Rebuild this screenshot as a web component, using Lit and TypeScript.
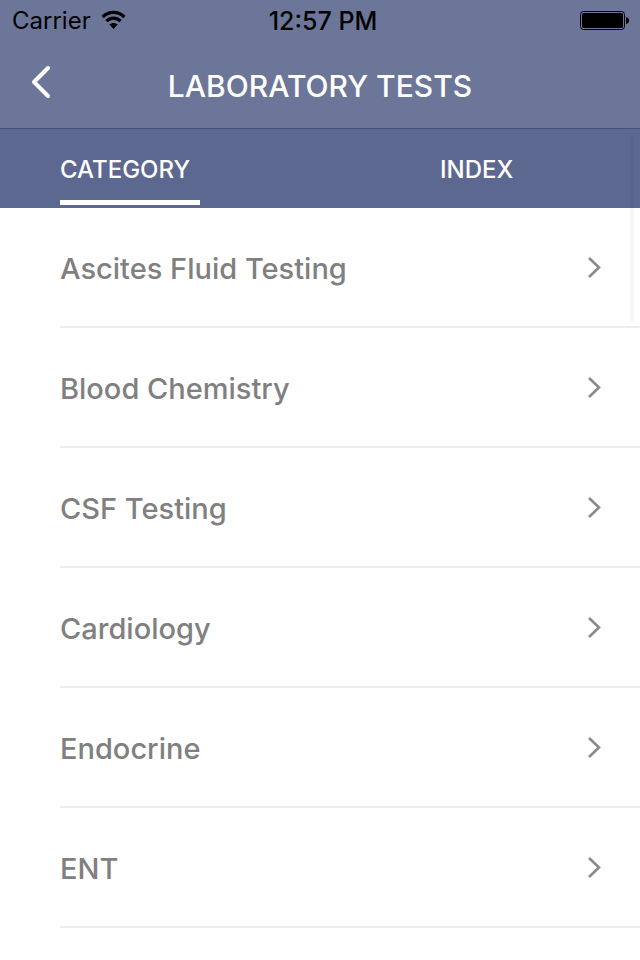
import { LitElement, html, css } from "lit";
import { customElement, state } from "lit/decorators.js";
import { classMap } from "lit/directives/class-map.js";

@customElement("status-bar")
export class StatusBar extends LitElement {
  static styles = css`
    :host {
      display: grid;
      grid-template-columns: 1fr auto 1fr;
      align-items: center;
      height: 40px;
      padding: 0 10px 0 12px;
      box-sizing: border-box;
      color: #000;
      font-size: 24px;
      line-height: 40px;
    }
    .carrier {
      display: flex;
      align-items: center;
      gap: 10px;
    }
    .carrier span,
    .time {
      padding-top: 2px;
      line-height: 38px;
    }
    .time {
      padding-left: 4px;
      font-size: 25px;
      font-weight: 500;
    }
    .battery {
      justify-self: end;
    }
    svg {
      display: block;
    }
  `;

  render() {
    return html`
      <div class="carrier">
        <span>Carrier</span>
        <svg width="26" height="20" viewBox="0 0 26 20" aria-label="Wi-Fi">
          <g fill="none" stroke="#000" stroke-width="3.2">
            <path d="M1.6 7C8 0.8 17 0.8 23.4 7" />
            <path d="M5.4 11.2C9.6 7.2 15.4 7.2 19.6 11.2" />
          </g>
          <path d="M12.5 19L8.3 14.6C10.7 12.4 14.3 12.4 16.7 14.6Z" />
        </svg>
      </div>
      <span class="time">12:57 PM</span>
      <svg class="battery" width="50" height="20" viewBox="0 0 50 20" aria-label="Battery full">
        <rect x="0.5" y="1.5" width="44" height="18" rx="3" fill="none" stroke="#000" />
        <rect x="2" y="3" width="41" height="15" rx="1.5" />
        <path d="M46 7C50 7.5 50 13.5 46 14Z" />
      </svg>
    `;
  }
}

@customElement("app-root")
export class AppRoot extends LitElement {
  @state() private tab = "CATEGORY";

  private tabs = ["CATEGORY", "INDEX"];

  private categories = [
    "Ascites Fluid Testing",
    "Blood Chemistry",
    "CSF Testing",
    "Cardiology",
    "Endocrine",
    "ENT",
  ];

  static styles = css`
    :host {
      display: block;
      position: relative;
      min-height: 100vh;
      background: #fff;
      font-family: Inter, "Liberation Sans", sans-serif;
    }
    .top {
      background: #6c7699;
    }
    .nav {
      display: grid;
      grid-template-columns: 80px 1fr 80px;
      align-items: center;
      height: 88px;
    }
    .back {
      display: flex;
      align-items: center;
      height: 88px;
      padding: 0 0 4px 28px;
      border: 0;
      background: none;
      cursor: pointer;
    }
    .title {
      margin: 0;
      padding-top: 4px;
      color: #fff;
      font-size: 30px;
      font-weight: 500;
      line-height: 36px;
      text-align: center;
      white-space: nowrap;
    }
    .tabs {
      display: flex;
      justify-content: space-between;
      height: 80px;
      padding: 0 60px;
      box-sizing: border-box;
      border-top: 1px solid #444f7a;
      background: #5d6890;
    }
    .tab {
      width: 140px;
      height: 76px;
      padding: 10px 0 0;
      box-sizing: border-box;
      border: 0;
      border-bottom: 5px solid transparent;
      background: none;
      color: #fff;
      font: 500 24px/32px Inter, "Liberation Sans", sans-serif;
      text-align: left;
      cursor: pointer;
    }
    .tab.active {
      border-bottom-color: #fff;
    }
    .list {
      margin: 0;
      padding: 0 0 0 60px;
      list-style: none;
    }
    .row {
      display: flex;
      align-items: center;
      justify-content: space-between;
      height: 120px;
      padding-right: 38px;
      box-sizing: border-box;
      border-bottom: 2px solid #ededed;
      color: #808080;
      font-size: 29px;
      font-weight: 500;
      line-height: 36px;
      text-decoration: none;
    }
    .label {
      padding-top: 4px;
    }
    .thumb {
      position: absolute;
      top: 134px;
      right: 6px;
      width: 4px;
      height: 188px;
      border-radius: 2px;
      background: rgba(0, 0, 0, 0.03);
    }
  `;

  render() {
    return html`
      <header class="top">
        <status-bar></status-bar>
        <div class="nav">
          <button class="back" aria-label="Back">
            <svg width="26" height="36" viewBox="0 0 26 36">
              <path
                d="M20 4L6 18L20 32"
                fill="none"
                stroke="#fff"
                stroke-width="4"
                stroke-linecap="round"
                stroke-linejoin="round"
              />
            </svg>
          </button>
          <h1 class="title">LABORATORY TESTS</h1>
        </div>
      </header>
      <nav class="tabs">
        ${this.tabs.map(
          (name) => html`<button
            class=${classMap({ tab: true, active: name === this.tab })}
            @click=${() => (this.tab = name)}
          >
            ${name}
          </button>`
        )}
      </nav>
      <ul class="list">
        ${this.categories.map(
          (name) => html`<li>
            <a class="row" href="#">
              <span class="label">${name}</span>
              <svg width="16" height="24" viewBox="0 0 16 24" aria-hidden="true">
                <path d="M3 3L13 12.5L3 22" fill="none" stroke="#8a8a8a" stroke-width="2.6" />
              </svg>
            </a>
          </li>`
        )}
      </ul>
      <div class="thumb"></div>
    `;
  }
}
